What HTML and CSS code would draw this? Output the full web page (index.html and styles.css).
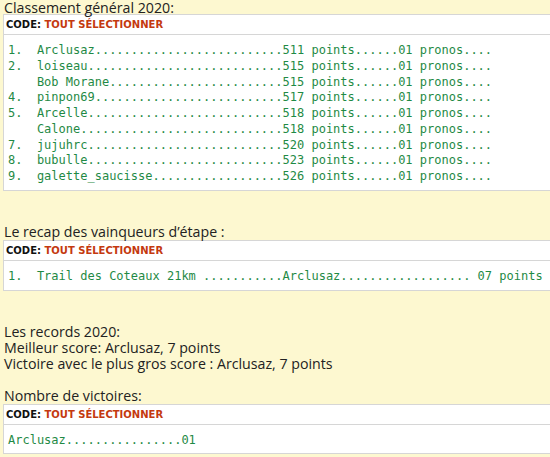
FILE: index.html
```html
<!DOCTYPE html>
<html lang="fr">
<head>
<meta charset="utf-8">
<title>Classement</title>
<link rel="stylesheet" href="styles.css">
</head>
<body>
<div class="post">
<div class="line title">Classement général 2020:</div>
<div class="codebox">
<div class="codehead"><span class="label">Code:</span> <a class="select">Tout sélectionner</a></div>
<pre class="code">1.  Arclusaz..........................511 points......01 pronos....
2.  loiseau...........................515 points......01 pronos....
    Bob Morane........................515 points......01 pronos....
4.  pinpon69..........................517 points......01 pronos....
5.  Arcelle...........................518 points......01 pronos....
    Calone............................518 points......01 pronos....
7.  jujuhrc...........................520 points......01 pronos....
8.  bubulle...........................523 points......01 pronos....
9.  galette_saucisse..................526 points......01 pronos....</pre>
</div>
<div class="line"></div>
<div class="line"></div>
<div class="line">Le recap des vainqueurs d’étape :</div>
<div class="codebox">
<div class="codehead"><span class="label">Code:</span> <a class="select">Tout sélectionner</a></div>
<pre class="code">1.  Trail des Coteaux 21km ...........Arclusaz.................. 07 points</pre>
</div>
<div class="line"></div>
<div class="line"></div>
<div class="line">Les records 2020:</div>
<div class="line">Meilleur score: Arclusaz, 7 points</div>
<div class="line">Victoire avec le plus gros score : Arclusaz, 7 points</div>
<div class="line"></div>
<div class="line">Nombre de victoires:</div>
<div class="codebox">
<div class="codehead"><span class="label">Code:</span> <a class="select">Tout sélectionner</a></div>
<pre class="code">Arclusaz................01</pre>
</div>
</div>
</body>
</html>
```

FILE: styles.css
```css
html, body {
  margin: 0;
  padding: 0;
  background: #fdf8d0;
  overflow: hidden;
}
.post {
  padding: 0 0 0 3px;
  font-family: "Open Sans", "DejaVu Sans", sans-serif;
  font-size: 14.2px;
  color: #222;
}
.line {
  height: 16px;
  line-height: 16px;
  padding-left: 1px;
  white-space: nowrap;
}
.title {
  height: 14px;
  line-height: 15px;
}
.codebox {
  background: #fff;
  border: 1px solid #d6d6d6;
  border-right: none;
}
.codehead {
  height: 19px;
  line-height: 19px;
  border-bottom: 1px solid #d6d6d6;
  padding-left: 2px;
  font-family: "DejaVu Sans", sans-serif;
  font-size: 10px;
  font-weight: bold;
  text-transform: uppercase;
  color: #111;
}
.select {
  color: #c4390f;
}
.code {
  margin: 0;
  padding: 8px 0 5px 4px;
  font-family: "DejaVu Sans Mono", monospace;
  font-size: 12px;
  line-height: 15.75px;
  color: #1f8a45;
}
.codebox + .line {
  margin-top: 1px;
}
```
